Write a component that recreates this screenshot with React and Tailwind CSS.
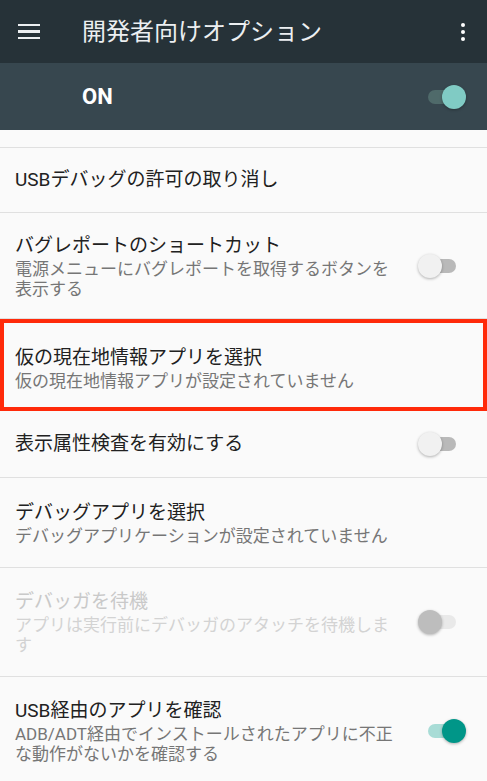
import React from 'react';

const font = { fontFamily: '"Roboto", "Noto Sans CJK JP", sans-serif' };

// Material-style switch: track behind, round thumb on top
const Switch = ({ on, disabled, dark }) => {
  let track = 'bg-[#b9b9b9]';
  let thumb = 'bg-[#f1f1f1]';
  if (on && dark) {
    track = 'bg-[#4f6a6a]';
    thumb = 'bg-[#80cbc4]';
  } else if (on) {
    track = 'bg-[#a8dcd6]';
    thumb = 'bg-[#009688]';
  } else if (disabled) {
    track = 'bg-[#e9e9e9]';
    thumb = 'bg-[#bdbdbd]';
  }
  return (
    <div className="relative w-[48px] h-[24px] shrink-0">
      <div className={`absolute left-[10px] right-[10px] top-[5px] h-[14px] rounded-full ${track}`}></div>
      <div
        className={`absolute top-0 w-[24px] h-[24px] rounded-full shadow-[0_1px_3px_rgba(0,0,0,0.3)] ${thumb} ${on ? 'right-0' : 'left-0'}`}
      ></div>
    </div>
  );
};

const Row = ({ title, summary, toggle, h, disabled, box = 'pl-[15px] pr-[21px] border-b border-[#e0e0e0]' }) => (
  <div className={`flex items-center shrink-0 ${h} ${box}`}>
    <div className="w-[384px] flex flex-col">
      <div className={`text-[19px] leading-[26px] ${disabled ? 'text-[#c9c9c9]' : 'text-[#212121]'}`}>{title}</div>
      {summary && (
        <div className={`text-[17px] leading-[20px] ${disabled ? 'text-[#d3d3d3]' : 'text-[#767676]'}`}>{summary}</div>
      )}
    </div>
    {toggle && (
      <div className="ml-auto">
        <Switch on={toggle === 'on'} disabled={disabled} />
      </div>
    )}
  </div>
);

export default function App() {
  return (
    <div className="w-full h-[781px] overflow-hidden bg-[#fafafa] flex flex-col" style={font}>
      {/* toolbar */}
      <div className="h-[63px] shrink-0 bg-[#263238] flex items-center">
        <div className="w-[82px] pl-[18px] flex flex-col gap-[4px]">
          <div className="w-[22px] h-[2.5px] bg-[#eceff1]"></div>
          <div className="w-[22px] h-[2.5px] bg-[#eceff1]"></div>
          <div className="w-[22px] h-[2.5px] bg-[#eceff1]"></div>
        </div>
        <div className="text-[24px] text-[#eceff1] leading-none">開発者向けオプション</div>
        <div className="ml-auto mr-[22px] flex flex-col gap-[3px]">
          <div className="w-[4px] h-[4px] rounded-full bg-white"></div>
          <div className="w-[4px] h-[4px] rounded-full bg-white"></div>
          <div className="w-[4px] h-[4px] rounded-full bg-white"></div>
        </div>
      </div>

      {/* master switch */}
      <div className="h-[67px] shrink-0 bg-[#37474f] flex items-center pl-[82px] pr-[21px]">
        <div className="text-[22px] font-bold text-white">ON</div>
        <div className="ml-auto">
          <Switch on dark />
        </div>
      </div>

      <div className="h-[18px] shrink-0 border-b border-[#e0e0e0]"></div>

      <Row h="h-[65px]" title="USBデバッグの許可の取り消し" />
      <Row
        h="h-[106px]"
        title="バグレポートのショートカット"
        summary="電源メニューにバグレポートを取得するボタンを表示する"
        toggle="off"
      />
      <Row
        h="h-[92px]"
        box="border-[4px] border-[#ff2a0a] pt-[6px] pl-[11px] pr-[17px]"
        title="仮の現在地情報アプリを選択"
        summary="仮の現在地情報アプリが設定されていません"
      />
      <Row h="h-[67px]" title="表示属性検査を有効にする" toggle="off" />
      <Row
        h="h-[90px]"
        title="デバッグアプリを選択"
        summary="デバッグアプリケーションが設定されていません"
      />
      <Row
        h="h-[109px]"
        disabled
        title="デバッガを待機"
        summary="アプリは実行前にデバッガのアタッチを待機します"
        toggle="off"
      />
      <Row
        h="h-[108px]"
        title="USB経由のアプリを確認"
        summary="ADB/ADT経由でインストールされたアプリに不正な動作がないかを確認する"
        toggle="on"
      />
    </div>
  );
}
